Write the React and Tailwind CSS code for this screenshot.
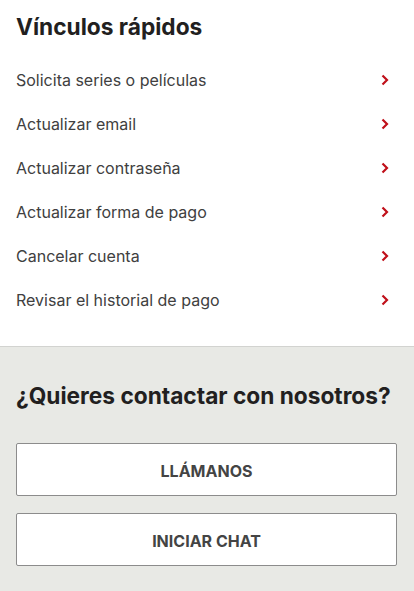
import React from "react";

const links = [
  "Solicita series o películas",
  "Actualizar email",
  "Actualizar contraseña",
  "Actualizar forma de pago",
  "Cancelar cuenta",
  "Revisar el historial de pago",
];

function Chevron() {
  return (
    <svg width="10" height="12" viewBox="0 0 10 12" fill="none" className="shrink-0">
      <path d="M2.5 1.5L7 6L2.5 10.5" stroke="#c0101a" strokeWidth="2.2" strokeLinecap="butt" strokeLinejoin="miter" />
    </svg>
  );
}

export default function App() {
  return (
    <div className="w-[414px] min-h-[591px] bg-[#e8e9e5] font-['Inter','Liberation_Sans',sans-serif]">
      <section className="bg-white pt-[12px] pb-[24px] border-b border-[#d2d3d0]">
        <h2 className="px-4 text-[22.7px] leading-[30px] font-bold text-[#221f1f] mb-4">
          Vínculos rápidos
        </h2>
        <ul>
          {links.map((l) => (
            <li key={l} className="h-[44px] pl-4 pr-[24px] flex items-center justify-between">
              <span className="text-[16px] text-[#404040]">{l}</span>
              <Chevron />
            </li>
          ))}
        </ul>
      </section>
      <section className="px-4 pt-[34px] pb-[25px]">
        <h2 className="text-[22.7px] leading-[30px] font-bold text-[#221f1f] mb-[32px]">
          ¿Quieres contactar con nosotros?
        </h2>
        <div className="flex flex-col gap-[17px]">
          <button className="h-[53px] w-[381px] bg-white border border-[#8c8c8c] rounded-[2px] text-[16px] leading-[20px] pt-[2px] font-bold text-[#444]">
            LLÁMANOS
          </button>
          <button className="h-[53px] w-[381px] bg-white border border-[#8c8c8c] rounded-[2px] text-[16px] leading-[20px] pt-[2px] font-bold text-[#444]">
            INICIAR CHAT
          </button>
        </div>
      </section>
    </div>
  );
}
